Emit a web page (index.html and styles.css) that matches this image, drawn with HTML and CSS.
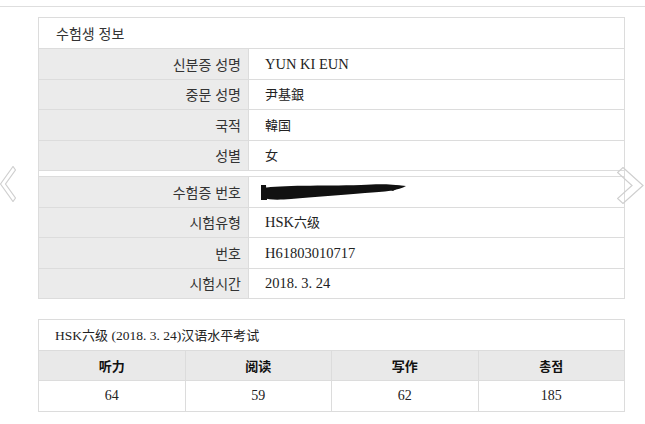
FILE: index.html
```html
<!DOCTYPE html>
<html lang="ko">
<head>
<meta charset="utf-8">
<title>수험생 정보</title>
<link rel="stylesheet" href="styles.css">
</head>
<body>
<div class="topline"></div>
<div class="wrap">
  <table class="info">
    <colgroup><col class="c-lbl"><col class="c-val"></colgroup>
    <tr><td class="title" colspan="2">수험생 정보</td></tr>
    <tr><td class="lbl">신분증 성명</td><td class="val">YUN KI EUN</td></tr>
    <tr><td class="lbl">중문 성명</td><td class="val"><span class="cjk">尹基銀</span></td></tr>
    <tr><td class="lbl">국적</td><td class="val"><span class="cjk">韓国</span></td></tr>
    <tr><td class="lbl">성별</td><td class="val"><span class="cjk">女</span></td></tr>
    <tr class="spacer"><td colspan="2"></td></tr>
    <tr><td class="lbl">수험증 번호</td><td class="val"><span class="redact"><svg width="146" height="18" viewBox="0 0 146 18"><path d="M2 5 C20 2 60 3 100 2 C118 1 128 1 145 3 C138 7 124 9 104 10 C82 12 52 14 30 16 C18 17 8 17 3 15 C0 12 0 8 2 5 Z" fill="#111"/><path d="M0 2 L5 2 L6 17 L0 17 Z" fill="#111"/><path d="M118 3 C126 2 134 2 140 3 L132 8 Z" fill="#111"/></svg></span></td></tr>
    <tr><td class="lbl">시험유형</td><td class="val">HSK<span class="cjk">六级</span></td></tr>
    <tr><td class="lbl">번호</td><td class="val">H61803010717</td></tr>
    <tr><td class="lbl">시험시간</td><td class="val">2018. 3. 24</td></tr>
  </table>

  <table class="score">
    <tr><td class="stitle" colspan="4">HSK<span class="cjk">六级</span> (2018. 3. 24)<span class="cjk">汉语水平考试</span></td></tr>
    <tr class="head"><th>听力</th><th>阅读</th><th>写作</th><th>총점</th></tr>
    <tr class="nums"><td>64</td><td>59</td><td>62</td><td>185</td></tr>
  </table>
</div>

<svg class="chev chev-left" width="16" height="36" viewBox="0 0 16 36"><polygon points="13,0.5 0.5,18 13,35.5 15.5,32 5.5,18 15.5,4" fill="none" stroke="#cfcfcf" stroke-width="1.2"/></svg>
<svg class="chev chev-right" width="27" height="37" viewBox="0 0 27 37"><polygon points="6,0.5 26,18.5 6,36.5 0.5,31.5 15,18.5 0.5,5.5" fill="none" stroke="#cfcfcf" stroke-width="1.2"/></svg>
</body>
</html>
```
FILE: styles.css
```css
html, body {
  margin: 0;
  padding: 0;
  background: #fff;
}
body {
  font-family: "Noto Sans CJK KR", "Noto Sans", sans-serif;
  color: #333;
  position: relative;
  height: 424px;
  overflow: hidden;
}
.topline {
  height: 6px;
  border-bottom: 1px solid #dedede;
}
.wrap {
  padding: 10px 0 0 38px;
}
.info, .score {
  width: 587px;
  border-collapse: collapse;
  border: 1px solid #dcdcdc;
  table-layout: fixed;
}
.c-lbl {
  width: 210px;
}
.info td {
  border: 1px solid #dcdcdc;
  height: 29.5px;
  padding: 0;
  line-height: 1;
}
.info .title {
  background: #fff;
  font-size: 14px;
  padding-left: 17px;
  height: 30px;
}
.info .lbl {
  background: #ebebeb;
  text-align: right;
  padding-right: 7px;
  font-size: 14px;
}
.info .val {
  background: #fff;
  padding-left: 16px;
  font-family: "Liberation Serif", "Noto Sans CJK SC", serif;
  font-size: 14.5px;
  color: #222;
}
.cjk {
  font-family: "Noto Sans CJK SC", sans-serif;
  font-size: 13px;
}
.info .spacer td {
  height: 5px;
  background: #fff;
}
.redact {
  display: inline-block;
  vertical-align: middle;
  margin-left: -4px;
  height: 18px;
}
.redact svg {
  display: block;
}
.score {
  margin-top: 20px;
}
.score td, .score th {
  border: 1px solid #dcdcdc;
  height: 29.5px;
  padding: 0;
  line-height: 1;
  font-family: "Liberation Serif", "Noto Sans CJK SC", serif;
}
.score .stitle {
  text-align: left;
  padding-left: 16px;
  font-size: 13.5px;
  color: #222;
}
.score .head th {
  background: #e9e9e9;
  font-weight: bold;
  font-size: 13px;
  color: #111;
  font-family: "Noto Sans CJK SC", sans-serif;
}
.score .nums td {
  text-align: center;
  font-size: 14px;
  color: #222;
}
.chev {
  position: absolute;
  display: block;
}
.chev-left {
  left: 0;
  top: 166px;
}
.chev-right {
  left: 617px;
  top: 167px;
}
```
